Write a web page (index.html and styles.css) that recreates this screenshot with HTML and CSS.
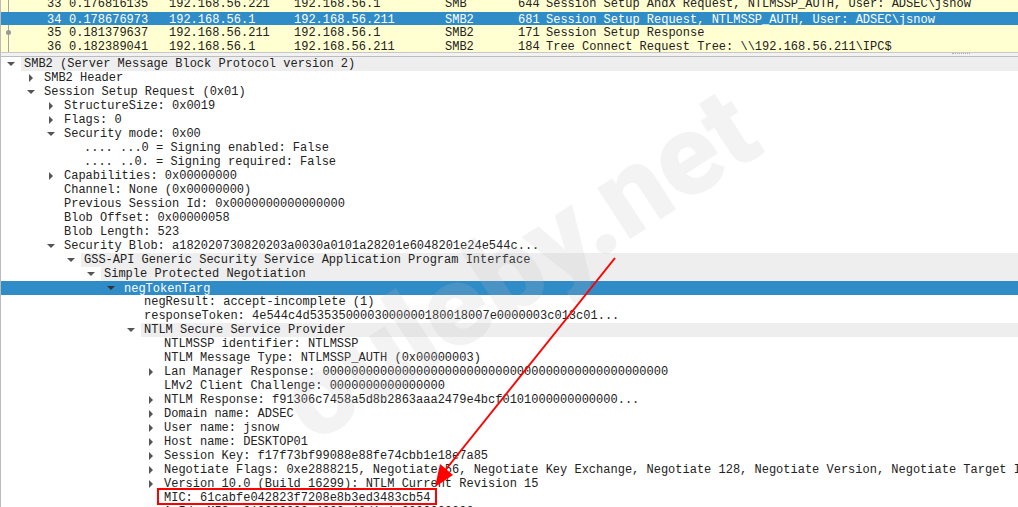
FILE: index.html
```html
<!DOCTYPE html>
<html>
<head>
<meta charset="utf-8">
<link rel="stylesheet" href="styles.css">
</head>
<body>
<div class="app">
  <div class="packets">
    <div class="pkt top"><span class="gutter"></span><span class="no">33</span><span class="time">0.176816135</span><span class="src">192.168.56.221</span><span class="dst">192.168.56.1</span><span class="proto">SMB</span><span class="len">644</span><span class="info">Session Setup AndX Request, NTLMSSP_AUTH, User: ADSEC\jsnow</span></div>
    <div class="pkt sel"><span class="gutter"></span><span class="no">34</span><span class="time">0.178676973</span><span class="src">192.168.56.1</span><span class="dst">192.168.56.211</span><span class="proto">SMB2</span><span class="len">681</span><span class="info">Session Setup Request, NTLMSSP_AUTH, User: ADSEC\jsnow</span></div>
    <div class="pkt mid"><span class="gutter"><i class="dot"></i></span><span class="no">35</span><span class="time">0.181379637</span><span class="src">192.168.56.211</span><span class="dst">192.168.56.1</span><span class="proto">SMB2</span><span class="len">171</span><span class="info">Session Setup Response</span></div>
    <div class="pkt"><span class="gutter"></span><span class="no">36</span><span class="time">0.182389041</span><span class="src">192.168.56.1</span><span class="dst">192.168.56.211</span><span class="proto">SMB2</span><span class="len">184</span><span class="info">Tree Connect Request Tree: \\192.168.56.211\IPC$</span></div>
  </div>
  <div class="splitter"><span class="grip"></span></div>
  <div class="tree">
    <div class="row l0 open band">SMB2 (Server Message Block Protocol version 2)</div>
    <div class="row l1 shut">SMB2 Header</div>
    <div class="row l1 open">Session Setup Request (0x01)</div>
    <div class="row l2 shut">StructureSize: 0x0019</div>
    <div class="row l2 shut">Flags: 0</div>
    <div class="row l2 open">Security mode: 0x00</div>
    <div class="row l3">.... ...0 = Signing enabled: False</div>
    <div class="row l3">.... ..0. = Signing required: False</div>
    <div class="row l2 shut">Capabilities: 0x00000000</div>
    <div class="row l2">Channel: None (0x00000000)</div>
    <div class="row l2">Previous Session Id: 0x0000000000000000</div>
    <div class="row l2">Blob Offset: 0x00000058</div>
    <div class="row l2">Blob Length: 523</div>
    <div class="row l2 open">Security Blob: a182020730820203a0030a0101a28201e6048201e24e544c...</div>
    <div class="row l3 open band">GSS-API Generic Security Service Application Program Interface</div>
    <div class="row l4 open band">Simple Protected Negotiation</div>
    <div class="row l5 open picked">negTokenTarg</div>
    <div class="row l6">negResult: accept-incomplete (1)</div>
    <div class="row l6">responseToken: 4e544c4d5353500003000000180018007e0000003c013c01...</div>
    <div class="row l6 open band">NTLM Secure Service Provider</div>
    <div class="row l7">NTLMSSP identifier: NTLMSSP</div>
    <div class="row l7">NTLM Message Type: NTLMSSP_AUTH (0x00000003)</div>
    <div class="row l7 shut">Lan Manager Response: 000000000000000000000000000000000000000000000000</div>
    <div class="row l7">LMv2 Client Challenge: 0000000000000000</div>
    <div class="row l7 shut">NTLM Response: f91306c7458a5d8b2863aaa2479e4bcf0101000000000000...</div>
    <div class="row l7 shut">Domain name: ADSEC</div>
    <div class="row l7 shut">User name: jsnow</div>
    <div class="row l7 shut">Host name: DESKTOP01</div>
    <div class="row l7 shut">Session Key: f17f73bf99088e88fe74cbb1e18e7a85</div>
    <div class="row l7 shut">Negotiate Flags: 0xe2888215, Negotiate 56, Negotiate Key Exchange, Negotiate 128, Negotiate Version, Negotiate Target Info, Negotiate Extended Security</div>
    <div class="row l7 shut">Version 10.0 (Build 16299): NTLM Current Revision 15</div>
    <div class="row l7">MIC: 61cabfe042823f7208e8b3ed3483cb54</div>
    <div class="row l7">AvId: MIC: 010000000c4000c40d1c1a0000000000</div>
    <div class="mark">ouleby.net</div>
    <svg class="arrow" width="1018" height="507" viewBox="0 0 1018 507">
      <line x1="615" y1="258" x2="443" y2="473" stroke="#f00" stroke-width="2"/>
      <polygon points="435,487 440,464 453,475" fill="#f00"/>
      <rect x="158" y="489" width="278" height="15" fill="none" stroke="#f00" stroke-width="2"/>
    </svg>
  </div>
</div>
</body>
</html>
```
FILE: styles.css
```css
html, body {
  margin: 0;
  padding: 0;
  background: #fff;
}
.app {
  position: relative;
  width: 1018px;
  height: 507px;
  overflow: hidden;
  font: 12px/14px "Liberation Mono", monospace;
  color: #222;
  border-left: 1px solid #bbb;
  box-sizing: border-box;
}
.packets {
  height: 52px;
  background: #ffffd2;
  border-bottom: 1px solid #c8c8c8;
  overflow: hidden;
}
.pkt {
  display: flex;
  height: 13px;
  line-height: 16px;
  white-space: pre;
}
.pkt.top {
  height: 12px;
  line-height: 9px;
}
.pkt.mid {
  height: 14px;
}
.pkt.sel {
  height: 13px;
  background: #308cc6;
  color: #fff;
}
.gutter {
  position: relative;
  width: 46px;
  flex: none;
  border-left: 1px solid #a6a6a6;
  margin-left: 7px;
  margin-right: -7px;
  box-sizing: border-box;
}
.dot {
  position: absolute;
  left: -3px;
  top: 5px;
  width: 5px;
  height: 5px;
  border-radius: 50%;
  background: #999;
}
.sel .gutter {
  border-left-color: transparent;
}
.no { width: 22px; flex: none; }
.time { width: 100px; flex: none; }
.src { width: 125px; flex: none; }
.dst { width: 151px; flex: none; }
.proto { width: 73px; flex: none; }
.len { width: 28px; flex: none; }
.info { flex: none; }
.splitter {
  position: relative;
  height: 3px;
  border-bottom: 1px solid #bdbdbd;
  background: #f2f2f2;
}
.grip {
  position: absolute;
  right: 48px;
  top: 0;
  width: 18px;
  height: 1px;
  border-top: 1px dotted #aaa;
}
.tree {
  position: relative;
}
.row {
  position: relative;
  height: 14px;
  line-height: 14px;
  white-space: pre;
}
.row::before {
  content: "";
  position: absolute;
  width: 0;
  height: 0;
}
.open::before {
  margin-left: -17px;
  top: 5px;
  border-left: 4px solid transparent;
  border-right: 4px solid transparent;
  border-top: 4px solid #555;
}
.shut::before {
  margin-left: -15px;
  top: 3px;
  border-top: 4px solid transparent;
  border-bottom: 4px solid transparent;
  border-left: 4px solid #555;
}
.l0 { padding-left: 23px; }
.l1 { padding-left: 43px; }
.l2 { padding-left: 63px; }
.l3 { padding-left: 83px; }
.l4 { padding-left: 103px; }
.l5 { padding-left: 123px; }
.l6 { padding-left: 143px; }
.l7 { padding-left: 163px; }
.band {
  background: linear-gradient(#eee, #eee) no-repeat;
}
.band.l0 { background-position: 20px 0; }
.band.l3 { background-position: 80px 0; }
.band.l4 { background-position: 100px 0; }
.band.l6 { background-position: 140px 0; }
.picked {
  background: #308cc6;
  color: #fff;
  line-height: 16px;
}
.picked::before {
  border-top-color: #333;
}
.mark {
  position: absolute;
  left: 322px;
  top: 288px;
  font: 900 115px/1 "Roboto", "Liberation Sans", sans-serif;
  color: rgba(190, 190, 190, 0.18);
  transform: rotate(-33deg);
  transform-origin: 0 100%;
  white-space: nowrap;
  pointer-events: none;
}
.arrow {
  position: absolute;
  left: -1px;
  top: -57px;
  pointer-events: none;
}
```
